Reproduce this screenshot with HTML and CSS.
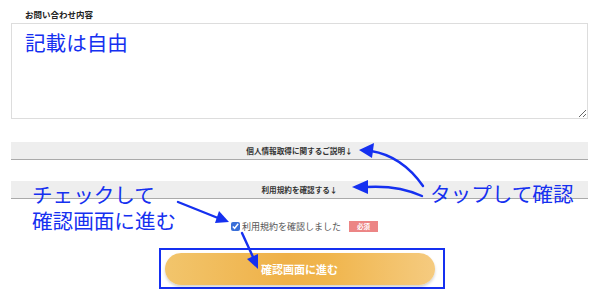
FILE: index.html
```html
<!DOCTYPE html>
<html lang="ja">
  <head>
    <meta charset="UTF-8" />
    <meta name="viewport" content="width=device-width, initial-scale=1.0" />
    <title>お問い合わせ</title>
    <link rel="stylesheet" href="styles.css">
  </head>
  <body>
    <div id="form">
      <div class="label">お問い合わせ内容</div>
      <textarea class="message">記載は自由</textarea>

      <div class="toggle first">個人情報取得に関するご説明↓</div>
      <div class="toggle second">利用規約を確認する↓</div>

      <div class="agree">
        <label><input type="checkbox" checked /> 利用規約を確認しました</label>
        <span class="required">必須</span>
      </div>

      <div class="submitrow">
        <div class="submitframe">
          <button class="submit" type="button">確認画面に進む</button>
        </div>
      </div>
    </div>

    <div class="note check">
      <div>チェックして</div>
      <div>確認画面に進む</div>
    </div>
    <div class="note tap">タップして確認</div>

    <svg class="arrows" width="600" height="298" viewBox="0 0 600 298">
      <g fill="none" stroke="#1530f0" stroke-width="2.4" stroke-linecap="round">
        <path d="M423 186 Q402 156 371 151" />
        <path d="M422 196 Q398 185 366 187" />
        <path d="M178 202 L218 218" />
        <path d="M242 233 L253 257" />
      </g>
      <g fill="#1530f0">
        <polygon points="359,150 374,143 372,158" />
        <polygon points="352,187 368,180 368,194" />
        <polygon points="229,222 215,223 219,211" />
        <polygon points="258,269 247,259 258,254" />
      </g>
    </svg>
  </body>
</html>
```

FILE: styles.css
```css
body {
  margin: 0;
  background: #fff;
  font-family: "Noto Sans CJK JP", "Noto Sans", sans-serif;
  color: #333;
}

#form {
  padding: 8px 12px 0 11px;
}

.label {
  padding-left: 14px;
  font-size: 8.5px;
  font-weight: bold;
  line-height: 12px;
  color: #222;
}

.message {
  display: block;
  box-sizing: border-box;
  width: 100%;
  height: 96px;
  margin-top: 3px;
  padding: 4px 13px;
  border: 1px solid #ddd;
  font-family: "Noto Sans CJK JP", sans-serif;
  font-size: 20.6px;
  line-height: 28px;
  color: #1530f0;
  resize: vertical;
}

.toggle {
  height: 17px;
  background: #eee;
  border-bottom: 1px solid #aaa;
  text-align: center;
  font-size: 7.6px;
  font-weight: bold;
  line-height: 18px;
  color: #333;
}

.first {
  margin-top: 23px;
}

.second {
  margin-top: 21px;
}

.agree {
  display: flex;
  justify-content: center;
  align-items: center;
  gap: 8px;
  margin-top: 20px;
  padding-left: 10px;
  height: 14px;
}

.agree label {
  display: flex;
  align-items: center;
  font-size: 9px;
  letter-spacing: 0;
  color: #555;
}

.agree input {
  width: 9px;
  height: 9px;
  margin: 0 2px 0 0;
  accent-color: #3a6fd8;
}

.required {
  width: 29px;
  height: 11px;
  background: #ec8585;
  color: #fff;
  font-size: 6.5px;
  font-weight: bold;
  line-height: 11px;
  text-align: center;
}

.submitrow {
  display: flex;
  justify-content: center;
  margin-top: 15px;
}

.submitframe {
  width: 270px;
  height: 34px;
  border: 2px solid #1530f0;
  padding: 3px 8px 0 4px;
  margin-left: 4px;
}

.submit {
  display: block;
  width: 270px;
  height: 32px;
  border: 0;
  border-radius: 16px;
  background: linear-gradient(90deg, #f2c56c 0%, #efb148 45%, #f0b54c 60%, #f5cb80 100%);
  box-shadow: 0 2px 3px rgba(0, 0, 0, 0.18);
  color: #fff;
  font-family: "Noto Sans CJK JP", sans-serif;
  font-size: 11px;
  font-weight: bold;
}

.note {
  position: absolute;
  font-family: "Noto Sans CJK JP", sans-serif;
  font-size: 20.6px;
  line-height: 26px;
  color: #1530f0;
}

.check {
  top: 181px;
  left: 32px;
}

.tap {
  top: 180px;
  left: 430px;
}

.arrows {
  position: absolute;
  top: 0;
  left: 0;
  pointer-events: none;
}
```
